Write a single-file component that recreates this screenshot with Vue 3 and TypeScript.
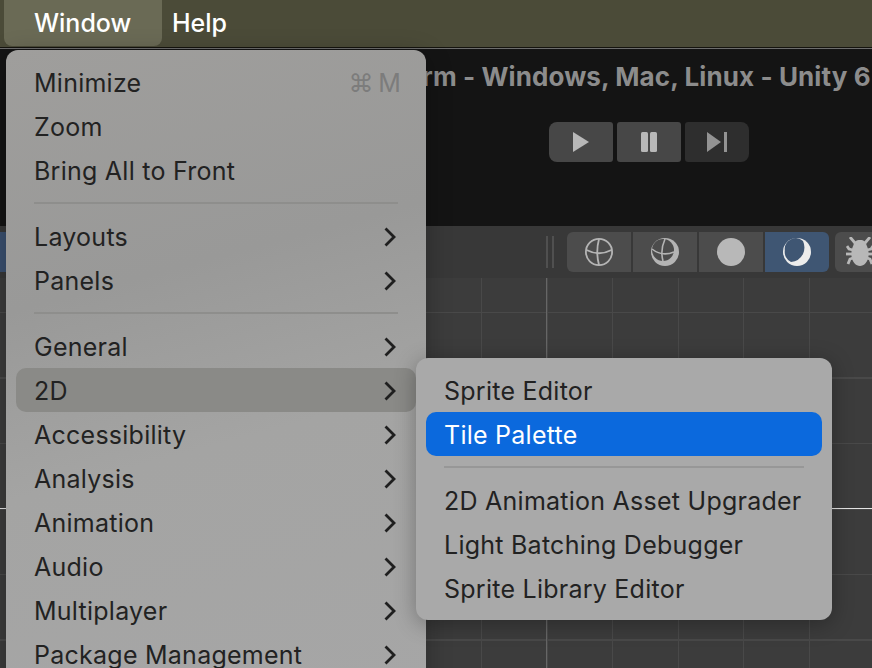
<script setup lang="ts">
// One row of a dropdown, or a divider when sep is set
interface MenuRow {
  label?: string
  shortcut?: string
  submenu?: boolean
  state?: 'open' | 'selected'
  sep?: boolean
}

const windowMenu: MenuRow[] = [
  { label: 'Minimize', shortcut: '⌘ M' },
  { label: 'Zoom' },
  { label: 'Bring All to Front' },
  { sep: true },
  { label: 'Layouts', submenu: true },
  { label: 'Panels', submenu: true },
  { sep: true },
  { label: 'General', submenu: true },
  { label: '2D', submenu: true, state: 'open' },
  { label: 'Accessibility', submenu: true },
  { label: 'Analysis', submenu: true },
  { label: 'Animation', submenu: true },
  { label: 'Audio', submenu: true },
  { label: 'Multiplayer', submenu: true },
  { label: 'Package Management', submenu: true },
]

const twoDMenu: MenuRow[] = [
  { label: 'Sprite Editor' },
  { label: 'Tile Palette', state: 'selected' },
  { sep: true },
  { label: '2D Animation Asset Upgrader' },
  { label: 'Light Batching Debugger' },
  { label: 'Sprite Library Editor' },
]
</script>

<template>
  <div class="screen">
    <header class="menubar">
      <span class="menubar__item menubar__item--active">Window</span>
      <span class="menubar__item">Help</span>
    </header>

    <section class="titlebar">
      <p class="titlebar__text">rm - Windows, Mac, Linux - Unity 6</p>
      <div class="transport">
        <button class="transport__btn transport__btn--first">
          <svg width="20" height="20" viewBox="0 0 20 20"><path d="M2 0 L18 10 L2 20 Z" /></svg>
        </button>
        <button class="transport__btn">
          <svg width="20" height="20" viewBox="0 0 20 20">
            <rect x="2" y="0" width="7" height="20" rx="1.5" />
            <rect x="11" y="0" width="7" height="20" rx="1.5" />
          </svg>
        </button>
        <button class="transport__btn transport__btn--last">
          <svg width="20" height="20" viewBox="0 0 20 20">
            <path d="M0 0 L14 10 L0 20 Z" />
            <rect x="17" y="0" width="3" height="20" />
          </svg>
        </button>
      </div>
    </section>

    <section class="toolbar">
      <div class="toolbar__tab"></div>
      <div class="toolbar__grip"></div>
      <div class="modes">
        <button class="mode">
          <svg width="30" height="30" viewBox="0 0 30 30" fill="none" stroke="#b4b4b4" stroke-width="1.800">
            <circle cx="15" cy="15" r="13.100" />
            <path d="M2.500 13 Q15 19.500 27.500 13" />
            <path d="M15 2 Q11.500 15 15 28" />
          </svg>
        </button>
        <button class="mode">
          <svg width="30" height="30" viewBox="0 0 30 30">
            <circle cx="15" cy="15" r="14" fill="#b4b4b4" />
            <circle cx="13" cy="13" r="11" fill="#4c4c4c" />
            <g fill="none" stroke="#b4b4b4" stroke-width="1.600">
              <path d="M2 12 Q12 20 24 15" />
              <path d="M15 2 Q10 13 13 24" />
            </g>
          </svg>
        </button>
        <button class="mode">
          <svg width="30" height="30" viewBox="0 0 30 30"><circle cx="15" cy="15" r="14" fill="#b8b8b8" /></svg>
        </button>
        <button class="mode mode--active">
          <svg width="30" height="30" viewBox="0 0 30 30">
            <circle cx="15" cy="15" r="14" fill="#ececec" />
            <path d="M2.800 13.500 A11 11 0 0 1 21 4 A16 16 0 0 1 21 17 A15 15 0 0 1 9 25 A11 11 0 0 1 2.800 13.500 Z" fill="#3f5673" />
          </svg>
        </button>
        <button class="mode mode--bug">
          <svg width="28" height="30" viewBox="0 0 28 30" fill="#b8b8b8">
            <path d="M14 3 C18 3 20 5 20.500 8 C22 11 23 15 22.500 19 C22 25 18 29 14 29 C10 29 6 25 5.500 19 C5 15 6 11 7.500 8 C8 5 10 3 14 3 Z" />
            <g fill="none" stroke="#b8b8b8" stroke-width="2.800">
              <path d="M4 0 L9 6" />
              <path d="M24 0 L19 6" />
              <path d="M1 9 L3 12 L7 13" />
              <path d="M27 9 L25 12 L21 13" />
              <path d="M0 17 L6 17" />
              <path d="M28 17 L22 17" />
              <path d="M2 27 L4 22 L7 21" />
              <path d="M26 27 L24 22 L21 21" />
            </g>
          </svg>
        </button>
      </div>
    </section>

    <section class="scene"></section>

    <nav class="dropdown dropdown--window">
      <template v-for="(row, i) in windowMenu" :key="i">
        <div v-if="row.sep" class="dropdown__sep"></div>
        <div v-else class="row" :class="row.state ? `row--${row.state}` : ''">
          <span>{{ row.label }}</span>
          <span v-if="row.shortcut" class="row__shortcut">{{ row.shortcut }}</span>
          <svg v-if="row.submenu" class="row__chevron" width="12" height="20" viewBox="0 0 12 20" fill="none">
            <path d="M1.500 1.500 L10 10 L1.500 18.500" stroke="#1f1f1f" stroke-width="2.800" />
          </svg>
        </div>
      </template>
    </nav>

    <nav class="dropdown dropdown--sub">
      <template v-for="(row, i) in twoDMenu" :key="i">
        <div v-if="row.sep" class="dropdown__sep"></div>
        <div v-else class="row" :class="row.state ? `row--${row.state}` : ''">
          <span>{{ row.label }}</span>
        </div>
      </template>
    </nav>
  </div>
</template>

<style>
html,
body {
  margin: 0;
  background: #3c3c3c;
}
</style>

<style scoped>
.screen {
  position: relative;
  width: 872px;
  height: 668px;
  overflow: hidden;
  display: flex;
  flex-direction: column;
  font-family: Inter, "Liberation Sans", "DejaVu Sans", sans-serif;
}

button {
  border: 0;
  padding: 0;
  display: grid;
  place-items: center;
}

.menubar {
  flex: 0 0 48px;
  box-sizing: border-box;
  display: flex;
  gap: 10px;
  padding: 0 4px 1px;
  background: #4b4b38;
  border-bottom: 1px solid #15140f;
  color: #fff;
  font-size: 25px;
  font-weight: 500;
}

.menubar__item {
  display: flex;
  align-items: center;
  padding-bottom: 1px;
}

.menubar__item--active {
  box-sizing: border-box;
  width: 158px;
  padding-left: 30px;
  background: #6a6a55;
  border-radius: 0 0 8px 8px;
}

.titlebar {
  flex: 0 0 178px;
  box-sizing: border-box;
  padding-top: 14px;
  background: #141414;
  border-top: 1px solid #6d6d6d;
  white-space: nowrap;
  overflow: hidden;
}

.titlebar__text {
  margin: 0 0 0 422px;
  font-size: 26px;
  line-height: 28px;
  letter-spacing: 0.1px;
  font-weight: 700;
  color: #8c8c8c;
}

.transport {
  display: flex;
  gap: 4px;
  margin: 31px 0 0 549px;
}

.transport__btn {
  width: 64px;
  height: 40px;
  border-radius: 3px;
  background: #474747;
}

.transport__btn svg {
  fill: #b8b8b8;
}

.transport__btn--first {
  border-radius: 8px 3px 3px 8px;
}

.transport__btn--last {
  border-radius: 3px 8px 8px 3px;
  background: #2e2e2e;
}

.transport__btn--last svg {
  fill: #939393;
}

.toolbar {
  flex: 0 0 52px;
  box-sizing: border-box;
  display: flex;
  align-items: flex-start;
  padding-top: 6px;
  background: #383838;
}

.toolbar__tab {
  flex: none;
  width: 6px;
  height: 40px;
  background: #3a5070;
}

.toolbar__grip {
  flex: none;
  box-sizing: border-box;
  width: 8px;
  height: 32px;
  margin: 4px 13px 0 540px;
  border-left: 2px solid #505050;
  border-right: 2px solid #505050;
}

.modes {
  display: flex;
  gap: 2px;
}

.mode {
  width: 64px;
  height: 40px;
  flex: none;
  background: #4c4c4c;
}

.mode:first-child {
  border-radius: 6px 0 0 6px;
}

.mode--active {
  background: #3f5673;
  border-radius: 0 6px 6px 0;
}

.mode--bug {
  box-sizing: border-box;
  margin-left: 4px;
  padding-left: 11px;
  place-items: center start;
  border-radius: 6px 0 0 6px;
}

.scene {
  flex: 1;
  background-color: #3c3c3c;
  background-image:
    linear-gradient(#666, #666),
    linear-gradient(#e4e4e4, #e4e4e4),
    repeating-linear-gradient(90deg, #494949 0 1px, transparent 1px 65.500px),
    repeating-linear-gradient(180deg, #494949 0 1px, transparent 1px 65.500px);
  background-size: 1px 100%, 100% 1px, 100% 100%, 100% 100%;
  background-position: 546px 0, 0 230px, 22.500px 0, 0 34px;
  background-repeat: no-repeat;
}

.dropdown {
  position: absolute;
  box-sizing: border-box;
  padding-top: 10px;
  color: #222;
  font-size: 25px;
  letter-spacing: 0.25px;
  box-shadow: 0 6px 26px rgba(0, 0, 0, 0.28);
}

.dropdown--window {
  left: 6px;
  top: 50px;
  width: 420px;
  height: 640px;
  border-radius: 12px 12px 0 0;
  background: linear-gradient(165deg, #9f9e9c, #999998 35%, #a4a4a3 60%, #a6a6a6);
}

.dropdown--sub {
  left: 416px;
  top: 358px;
  width: 416px;
  height: 262px;
  border-radius: 12px;
  background: #a9a9a9;
  box-shadow: 0 4px 22px rgba(0, 0, 0, 0.3);
}

.dropdown__sep {
  height: 2px;
  margin: 10px 28px;
  background: #8e8e8c;
}

.dropdown--sub .dropdown__sep {
  background: #979797;
}

.row {
  box-sizing: border-box;
  height: 44px;
  margin: 0 10px;
  padding: 2px 18px 0;
  display: flex;
  align-items: center;
  justify-content: space-between;
  border-radius: 10px;
  white-space: nowrap;
}

.row--open {
  background: #8a8a87;
}

.row--selected {
  background: #0b69dd;
  color: #fff;
}

.row__shortcut {
  color: #7c7c7c;
  word-spacing: -3px;
  margin-right: -3px;
}

.row__chevron {
  flex: none;
  margin-right: 2.500px;
}
</style>
